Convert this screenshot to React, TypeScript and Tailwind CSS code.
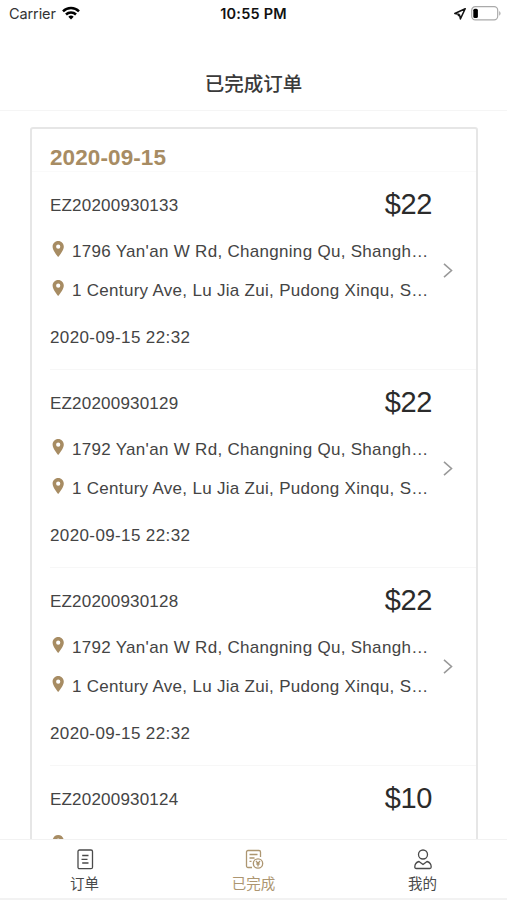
import type { ReactNode } from "react";

interface Order {
  id: string;
  price: string;
  from: string;
  to: string;
  time: string;
}

const orders: Order[] = [
  {
    id: "EZ20200930133",
    price: "$22",
    from: "1796 Yan'an W Rd, Changning Qu, Shangh…",
    to: "1 Century Ave, Lu Jia Zui, Pudong Xinqu, S…",
    time: "2020-09-15 22:32",
  },
  {
    id: "EZ20200930129",
    price: "$22",
    from: "1792 Yan'an W Rd, Changning Qu, Shangh…",
    to: "1 Century Ave, Lu Jia Zui, Pudong Xinqu, S…",
    time: "2020-09-15 22:32",
  },
  {
    id: "EZ20200930128",
    price: "$22",
    from: "1792 Yan'an W Rd, Changning Qu, Shangh…",
    to: "1 Century Ave, Lu Jia Zui, Pudong Xinqu, S…",
    time: "2020-09-15 22:32",
  },
  {
    id: "EZ20200930124",
    price: "$10",
    from: "1792 Yan'an W Rd, Changning Qu, Shangh…",
    to: "1 Century Ave, Lu Jia Zui, Pudong Xinqu, S…",
    time: "2020-09-15 22:32",
  },
];

function StatusBar() {
  return (
    <div className="grid h-7 shrink-0 grid-cols-3 items-center pl-[9px] pr-[6px] font-['Inter',sans-serif] text-[#111]">
      <div className="flex items-center gap-[6px]">
        <span className="text-[14.5px] tracking-[-0.1px] text-[#333]">Carrier</span>
        <svg className="-mt-[3px] h-[14px] w-[18px]" viewBox="0 0 18 14" fill="none" stroke="#000" strokeWidth="2.5">
          <path d="M1 5.3a11.4 11.4 0 0 1 16 0" />
          <path d="M4 8.5a7.1 7.1 0 0 1 10 0" />
          <path d="M9 13.5 6.3 10.8a3.8 3.8 0 0 1 5.4 0Z" fill="#000" stroke="none" />
        </svg>
      </div>
      <span className="pr-[3px] text-center text-[14.5px] font-semibold tracking-[0.2px]">10:55 PM</span>
      <div className="flex items-center justify-end gap-[5px]">
        <svg className="-mt-px h-3 w-3" viewBox="0 0 12 12" fill="none" stroke="#111" strokeWidth="1.5" strokeLinejoin="round">
          <path d="M11.2.8.8 5.5l4 .8-.4 1.200 1.200-.4.8 3.800Z" />
        </svg>
        <svg className="-mt-[2px] h-[15px] w-[30px]" viewBox="0 0 30 15" fill="none">
          <rect x="0.7" y="0.7" width="26" height="13.2" rx="3.6" stroke="#aaa" strokeWidth="1.2" />
          <rect x="2.3" y="2.7" width="4.6" height="9.2" rx="1.5" fill="#000" />
          <path d="M28.2 5v4.8c1.8-.8 1.8-4 0-4.8Z" fill="#aaa" />
        </svg>
      </div>
    </div>
  );
}

function Address({ text }: { text: string }) {
  return (
    <div className="flex h-[39px] items-center gap-2">
      <svg className="-mt-[5px] h-4 w-[14px] shrink-0" viewBox="0 0 14 16" fill="#a78c63">
        <path
          fillRule="evenodd"
          d="M8.200 0C5 0 2.600 2.500 2.600 5.700 2.600 9.500 8.200 16 8.200 16s5.600-6.500 5.600-10.300C13.800 2.500 11.400 0 8.200 0Zm0 3.600a2.100 2.100 0 1 1 0 4.200 2.100 2.100 0 0 1 0-4.200Z"
        />
      </svg>
      <span className="whitespace-nowrap text-[17px] tracking-[0.3px]">{text}</span>
    </div>
  );
}

function OrderRow({ order }: { order: Order }) {
  return (
    <div className="ml-[18px] flex h-[198px] border-b border-[#f7f7f7]">
      <div className="w-[382px] shrink-0">
        <div className="flex h-[60px] items-center justify-between pt-[6px]">
          <span className="mt-[2px] text-[17px] tracking-[0.2px]">{order.id}</span>
          <span className="text-[29px] tracking-[-0.4px] text-[#2b2b2b]">{order.price}</span>
        </div>
        <Address text={order.from} />
        <Address text={order.to} />
        <div className="flex h-14 items-center text-[17px] tracking-[0.38px]">{order.time}</div>
      </div>
      <div className="flex items-center pl-[11px]">
        <svg className="h-[15px] w-[10px]" viewBox="0 0 10 15" fill="none" stroke="#999" strokeWidth="1.6">
          <path d="m1 .8 7.500 6.700L1 14.200" />
        </svg>
      </div>
    </div>
  );
}

function Tab({ label, active, children }: { label: string; active?: boolean; children: ReactNode }) {
  return (
    <div className={`flex flex-1 flex-col items-center ${active ? "text-[#ad9671]" : "text-[#4a4a4a]"}`}>
      <svg className="mt-[9px] h-[21px] w-[20px]" viewBox="0 0 20 21" fill="none" stroke="currentColor" strokeWidth="1.3" strokeLinejoin="round">
        {children}
      </svg>
      <span className="mt-[5px] text-[14.500px] leading-[18px]">{label}</span>
    </div>
  );
}

export default function App() {
  return (
    <div className="flex h-[900px] w-[507px] flex-col overflow-hidden bg-white font-['Liberation_Sans','Noto_Sans_CJK_SC',sans-serif] text-[#444]">
      <StatusBar />
      <header className="flex h-[83px] shrink-0 items-center justify-center border-b border-[#f5f5f5] pt-8">
        <h1 className="text-[19.500px] font-medium text-[#3a3a3a]">已完成订单</h1>
      </header>

      <main className="min-h-0 flex-1 overflow-hidden pl-[30px] pr-[29px] pt-4">
        <section className="rounded-[3px] border-2 border-[#e6e6e6] bg-white">
          <div className="flex h-[43px] items-center border-b border-[#fafafa] pl-[18px] pt-4">
            <h2 className="text-[22.500px] font-bold tracking-[0.1px] text-[#a78c63]">2020-09-15</h2>
          </div>
          {orders.map((order) => (
            <OrderRow key={order.id} order={order} />
          ))}
        </section>
      </main>

      <nav className="flex h-[61px] shrink-0 border-b-2 border-t border-b-[#f2f2f2] border-t-[#f2f2f2] bg-white">
        <Tab label="订单">
          <rect x="3" y="1" width="14.500" height="18.700" rx="1.500" />
          <path d="M7.200 6.500h6.300M6.500 10.300h6M7.200 14h6.300" />
        </Tab>
        <Tab label="已完成" active>
          <path d="M8 18.500H4A1.500 1.500 0 0 1 2.500 17V3A1.500 1.500 0 0 1 4 1.500h11A1.500 1.500 0 0 1 16.500 3v5M5.500 5.500h8M5.500 9h5M5.500 12.300h2" />
          <circle cx="14" cy="14.500" r="4.700" />
          <path d="m12 12 2 2.400 2-2.400M14 14.400v3M12.300 15h3.400" />
        </Tab>
        <Tab label="我的">
          <circle cx="10" cy="5.500" r="4.500" />
          <path d="M6 12.500 10 15.500 14 12.500c2.600.7 4.200 2.600 4.200 5.500 0 1-.5 1.500-1.500 1.500H3.300c-1 0-1.500-.5-1.500-1.500 0-2.900 1.600-4.800 4.200-5.500Z" />
        </Tab>
      </nav>
    </div>
  );
}
